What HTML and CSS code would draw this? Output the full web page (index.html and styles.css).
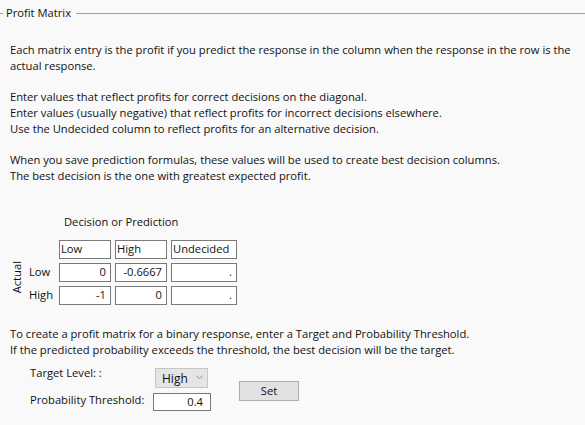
FILE: index.html
```html
<!DOCTYPE html>
<html lang="en">
<head>
  <meta charset="utf-8" />
  <title>Profit Matrix</title>
  <link rel="stylesheet" href="styles.css">
</head>
<body>
  <div class="outline">
    <span class="rule short"></span>
    <span class="title">Profit Matrix</span>
    <span class="rule"></span>
  </div>

  <div class="panel">
    <p class="first">Each matrix entry is the profit if you predict the response in the column when the response in the row is the actual response.</p>

    <p>Enter values that reflect profits for correct decisions on the diagonal.<br>
    Enter values (usually negative) that reflect profits for incorrect decisions elsewhere.<br>
    Use the Undecided column to reflect profits for an alternative decision.</p>

    <p>When you save prediction formulas, these values will be used to create best decision columns.<br>
    The best decision is the one with greatest expected profit.</p>

    <div class="caption">Decision or Prediction</div>
    <div class="matrix">
      <div class="actual">Actual</div>
      <div class="cell head c1">Low</div>
      <div class="cell head">High</div>
      <div class="cell head">Undecided</div>

      <div class="label">Low</div>
      <div class="cell">0</div>
      <div class="cell">-0.6667</div>
      <div class="cell">.</div>

      <div class="label">High</div>
      <div class="cell">-1</div>
      <div class="cell">0</div>
      <div class="cell">.</div>
    </div>

    <p class="binary">To create a profit matrix for a binary response, enter a Target and Probability Threshold.<br>
    If the predicted probability exceeds the threshold, the best decision will be the target.</p>

    <div class="form">
      <div class="flabel top">Target Level: :</div>
      <div class="combo">
        <span>High</span>
        <svg width="7" height="5" viewBox="0 0 7 5"><polyline points="0.5,0.8 3.5,3.8 6.5,0.8" fill="none" stroke="#8a8a8a" stroke-width="1"/></svg>
      </div>
      <button class="set">Set</button>
      <div class="flabel">Probability Threshold:</div>
      <div class="field">0.4</div>
    </div>
  </div>
</body>
</html>
```
FILE: styles.css
```css
body {
  margin: 0;
  background: #f9f9f9;
  color: #111;
  font-family: "Open Sans", sans-serif;
  font-size: 11.2px;
  line-height: 16px;
}
.outline {
  display: flex;
  align-items: center;
  padding-top: 5px;
}
.rule {
  flex: 1;
  height: 1px;
  background: #a0a0a0;
}
.rule.short {
  flex: none;
  width: 3px;
}
.title {
  padding: 0 5px 0 3px;
}
.panel {
  padding-left: 10px;
}
p {
  margin: 15px 0 0;
}
p.first {
  margin-top: 21px;
  padding-right: 8px;
}
.caption {
  margin: 30px 0 0 54px;
}
.matrix {
  display: grid;
  grid-template-columns: 17px 26px 52px 52px 66px;
  grid-template-rows: 19px 19px 19px;
  gap: 4px;
  margin: 10px 0 0 -2px;
}
.actual {
  grid-column: 1;
  grid-row: 2 / 4;
  writing-mode: vertical-rl;
  transform: rotate(180deg);
  align-self: start;
  justify-self: center;
  margin-top: -2px;
  line-height: 13px;
}
.head.c1 {
  grid-column: 3;
}
.label {
  grid-column: 2;
  line-height: 13px;
  padding-top: 2px;
}
.cell {
  background: #fff;
  border: 1px solid #7a7a7a;
  line-height: 13px;
  padding: 1px 4px 0 2px;
  text-align: right;
  white-space: nowrap;
}
.cell.head {
  text-align: left;
  padding-left: 1px;
}
p.binary {
  margin-top: 21px;
}
.form {
  display: grid;
  grid-template-columns: 123px 58px auto;
  grid-template-rows: 20px 18px;
  row-gap: 5px;
  margin: 10px 0 0 20px;
}
.flabel {
  line-height: 13px;
  white-space: nowrap;
}
.flabel.top {
  margin-top: -2px;
}
.combo {
  margin-left: 2px;
  width: 53px;
  box-sizing: border-box;
  background: #e5e5e5;
  border: 1px solid #c6c6c6;
  display: flex;
  align-items: center;
  gap: 8px;
  padding: 2px 0 0 6px;
  font-size: 12px;
}
.combo svg {
  margin-top: -4px;
}
.set {
  grid-column: 3;
  grid-row: 1 / 3;
  align-self: start;
  margin: 13px 0 0 28px;
  width: 60px;
  height: 20px;
  background: #e1e1e1;
  border: 1px solid #adadad;
  border-radius: 0;
  font: inherit;
  color: #111;
  line-height: 16px;
  padding: 0;
}
.field {
  background: #fff;
  border: 1px solid #7a7a7a;
  line-height: 14px;
  padding: 1px 7px 0 0;
  text-align: right;
}
```
